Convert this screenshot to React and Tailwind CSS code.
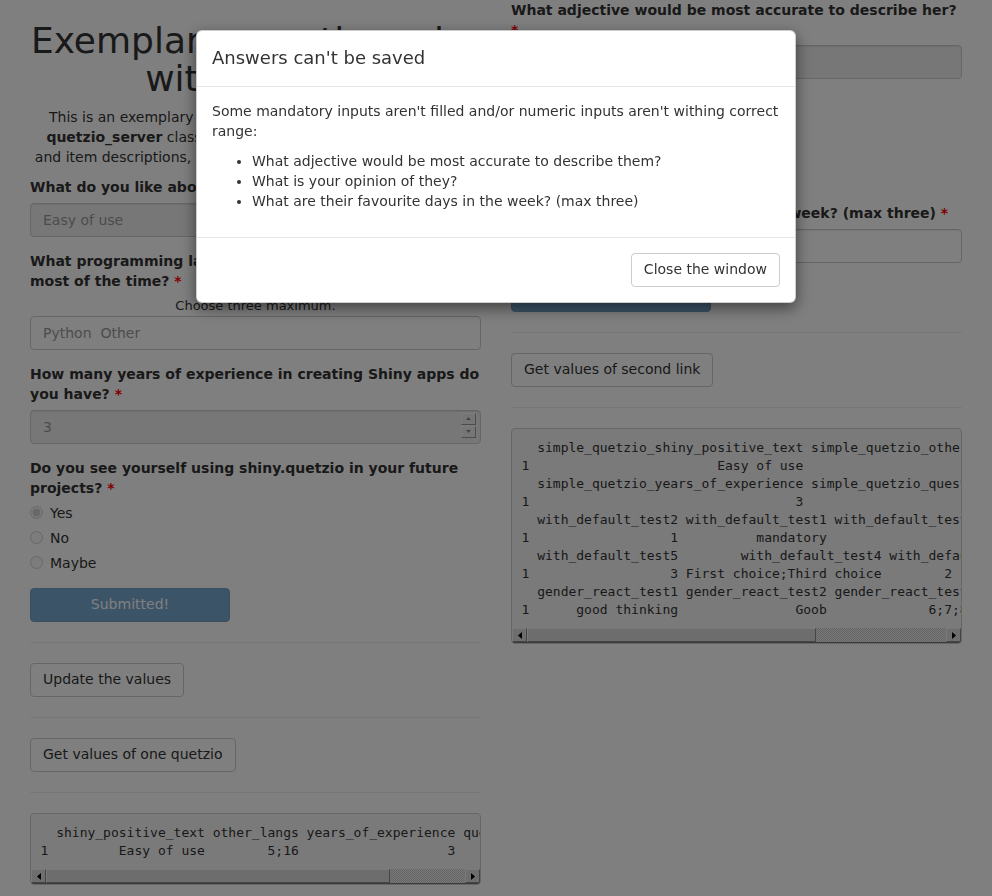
import React from 'react';

const Req = () => <span className="text-[red]">*</span>;

const Label = ({ children, className = 'mb-[6px]' }) => (
  <label className={`block font-bold leading-[20px] ${className}`}>
    {children} <Req />
  </label>
);

const Btn = ({ children }) => (
  <button className="h-[34px] px-[12px] pt-[5px] pb-[7px] border border-[#ccc] rounded-[4px] bg-white text-[#333] leading-[20px]">
    {children}
  </button>
);

const Submitted = () => (
  <button
    disabled
    className="w-[200px] h-[34px] pt-[5px] pb-[7px] border border-[#2e6da4] rounded-[4px] bg-[#337ab7] text-white opacity-65 leading-[20px]"
  >
    Submitted!
  </button>
);

const Radio = ({ label, checked }) => (
  <label className="flex items-center gap-[7px] h-[20px]">
    <input type="radio" disabled defaultChecked={checked} className="m-0 w-[13px] h-[13px]" />
    <span>{label}</span>
  </label>
);

// classic scrollbar arrow button
const ScrollBtn = ({ left }) => (
  <div className="w-[15px] h-full flex items-center justify-center bg-[#dcdcdc] border-t border-l border-t-[#f4f4f4] border-l-[#f4f4f4] border-b border-r border-b-[#8a8a8a] border-r-[#8a8a8a]">
    <svg width="4" height="7" viewBox="0 0 4 7">
      {left ? <polygon points="4,0 0,3.5 4,7" fill="#000" /> : <polygon points="0,0 4,3.5 0,7" fill="#000" />}
    </svg>
  </div>
);

const Pre = ({ text, thumbCls }) => (
  <div className="border border-[#ccc] rounded-[4px] bg-[#f5f5f5] overflow-hidden">
    <pre className="m-0 p-[9.5px] pr-0 overflow-hidden whitespace-pre font-['DejaVu_Sans_Mono',monospace] text-[13px] leading-[18px] text-[#333]">
      {text}
    </pre>
    <div className="flex h-[15px] border-b border-[#777]">
      <ScrollBtn left />
      <div className="flex-1 bg-[repeating-conic-gradient(#c8c8c8_0_25%,#f4f4f4_0_50%)] bg-[length:2px_2px]">
        <div
          className={`h-full bg-[#dadada] border-t border-l border-t-[#f4f4f4] border-l-[#f4f4f4] border-b border-r border-b-[#8a8a8a] border-r-[#8a8a8a] ${thumbCls}`}
        />
      </div>
      <ScrollBtn />
    </div>
  </div>
);

const leftOut = [
  '  shiny_positive_text other_langs years_of_experience question_usage',
  '1         Easy of use        5;16                   3            Yes',
].join('\n');

const rightOut = [
  '  simple_quetzio_shiny_positive_text simple_quetzio_other_langs',
  '1                        Easy of use                       5;16',
  '  simple_quetzio_years_of_experience simple_quetzio_question_usage',
  '1                                  3                           Yes',
  '  with_default_test2 with_default_test1 with_default_test3 with_default_test6',
  '1                  1          mandatory                  5             second',
  '  with_default_test5        with_default_test4 with_default_test7',
  '1                  3 First choice;Third choice        2 (default)',
  '  gender_react_test1 gender_react_test2 gender_react_test3     gender_react_test4',
  '1      good thinking               Goob             6;7;8 She is very thoughtful',
].join('\n');

const inputCls =
  'block w-full h-[34px] px-[12px] border border-[#ccc] rounded-[4px] shadow-[inset_0_1px_1px_rgba(0,0,0,0.075)] placeholder:text-[#999] text-[#999]';

const SpinBox = ({ up }) => (
  <div className="w-[15px] h-[12px] flex items-center justify-center bg-[#ececec] border-t border-l border-t-[#fafafa] border-l-[#fafafa] border-b border-r border-b-[#9a9a9a] border-r-[#9a9a9a]">
    <svg width="5" height="3" viewBox="0 0 5 3">
      {up ? <polygon points="0,3 2.5,0 5,3" fill="#888" /> : <polygon points="0,0 2.5,3 5,0" fill="#888" />}
    </svg>
  </div>
);

export default function App() {
  return (
    <div className="relative h-screen overflow-hidden bg-white font-['DejaVu_Sans',sans-serif] text-[14px] leading-[20px] text-[#333]">
      <div className="grid grid-cols-2 px-[15px]">
        {/* left column */}
        <div className="px-[15px]">
          <h1 className="mt-[22px] mb-[9px] text-[36px] leading-[38px] text-center font-normal whitespace-nowrap">
            Exemplary questionnaire
            <br />
            with quetzio
          </h1>
          <p className="mb-[10px] text-center whitespace-nowrap">
            This is an exemplary questionnaire generated by using the
            <br />
            <b>quetzio_server</b> class. It showcases various types of inputs
            <br />
            and item descriptions, and how it can be customized with CSS.
          </p>

          <div className="mb-[14px]">
            <Label>What do you like about shiny.quetzio?</Label>
            <input disabled placeholder="Easy of use" className={`${inputCls} bg-[#eee]`} />
          </div>

          <div className="mb-[14px]">
            <Label>What programming languages other than R do you use most of the time?</Label>
            <div className="text-center text-[13px] leading-[18.57px]">Choose three maximum.</div>
            <div className="flex items-center h-[34px] px-[12px] border border-[#ccc] rounded-[4px] bg-white text-[#999] whitespace-pre">
              Python  Other
            </div>
          </div>

          <div className="mb-[14px]">
            <Label>How many years of experience in creating Shiny apps do you have?</Label>
            <div className="relative">
              <input
                type="number"
                disabled
                defaultValue={3}
                className={`${inputCls} bg-[#eee] [appearance:textfield] [&::-webkit-inner-spin-button]:appearance-none [&::-webkit-outer-spin-button]:appearance-none`}
              />
              <div className="absolute right-[5px] top-[3px] flex flex-col gap-[1px]">
                <SpinBox up />
                <SpinBox />
              </div>
            </div>
          </div>

          <div className="mb-[15.5px]">
            <Label className="mb-[5px]">Do you see yourself using shiny.quetzio in your future projects?</Label>
            <div className="flex flex-col gap-[5px]">
              <Radio label="Yes" checked />
              <Radio label="No" />
              <Radio label="Maybe" />
            </div>
          </div>

          <Submitted />
          <hr className="my-[20px] border-0 border-t border-[#eee]" />
          <Btn>Update the values</Btn>
          <hr className="my-[20px] border-0 border-t border-[#eee]" />
          <Btn>Get values of one quetzio</Btn>
          <hr className="my-[20px] border-0 border-t border-[#eee]" />
          <Pre text={leftOut} thumbCls="w-[82%]" />
        </div>

        {/* right column */}
        <div className="px-[15px]">
          <div className="mb-[14px]">
            <Label className="mb-[5px]">What adjective would be most accurate to describe her?</Label>
            <input disabled placeholder="Smart" className={`${inputCls} bg-[#eee]`} />
          </div>

          <div className="mb-[15px]">
            <Label className="mb-[5px]">What is your opinion of her?</Label>
            <div className="flex flex-col gap-[5px]">
              <Radio label="Good" checked />
              <Radio label="Neutral" />
              <Radio label="Bad" />
            </div>
          </div>

          <div className="mb-[15px]">
            <Label>What are her favourite days in the week? (max three)</Label>
            <div className="h-[34px] border border-[#ccc] rounded-[4px] bg-white shadow-[inset_0_1px_1px_rgba(0,0,0,0.075)]" />
          </div>

          <Submitted />
          <hr className="my-[20px] border-0 border-t border-[#eee]" />
          <Btn>Get values of second link</Btn>
          <hr className="my-[20px] border-0 border-t border-[#eee]" />
          <Pre text={rightOut} thumbCls="w-[69%]" />
        </div>
      </div>

      {/* modal backdrop */}
      <div className="fixed inset-0 bg-black/50" />

      {/* modal */}
      <div className="fixed inset-0">
        <div className="w-[600px] mx-auto mt-[30px] bg-white border border-black/20 rounded-[6px] shadow-[0_5px_15px_rgba(0,0,0,0.5)]">
          <div className="pt-[15px] px-[15px] pb-[16px] border-b border-[#e5e5e5]">
            <h4 className="m-0 text-[18px] leading-[24px] font-normal">Answers can't be saved</h4>
          </div>
          <div className="pt-[14px] px-[15px] pb-[16px]">
            <p className="mb-[10px]">
              Some mandatory inputs aren't filled and/or numeric inputs aren't withing correct range:
            </p>
            <ul className="mb-[10px] pl-[40px] list-disc">
              <li>What adjective would be most accurate to describe them?</li>
              <li>What is your opinion of they?</li>
              <li>What are their favourite days in the week? (max three)</li>
            </ul>
          </div>
          <div className="p-[15px] border-t border-[#e5e5e5] flex justify-end">
            <Btn>Close the window</Btn>
          </div>
        </div>
      </div>
    </div>
  );
}
